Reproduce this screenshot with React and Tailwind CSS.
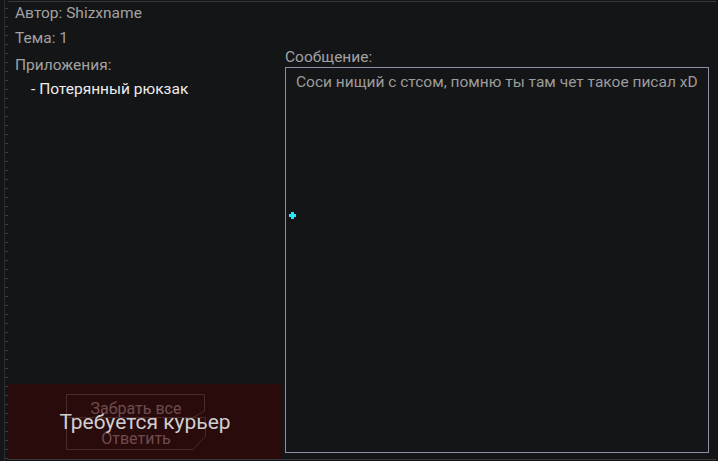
export default function App() {
  return (
    <div
      className="relative flex h-[461px] w-[718px] overflow-hidden bg-[#141517] text-[15.5px] leading-none"
      style={{ fontFamily: "Roboto, 'Noto Sans', sans-serif" }}
    >
      <Ruler side="left" />
      <div className="flex flex-1 flex-col border-t border-[#36373a] mt-[1px] border-b mb-[1px]">
        <div className="flex flex-1">
          <div className="flex w-[274px] flex-col">
            <div className="flex flex-col pl-[7px] pt-[4px] text-[#a2a2a2]">
              <p className="h-[25px]">Автор: Shizxname</p>
              <p className="h-[27px]">Тема: 1</p>
              <p className="h-[24px]">Приложения:</p>
              <p className="pl-[16px] text-[#ececec]">- Потерянный рюкзак</p>
            </div>
            <div className="mt-auto">
              <CourierPanel />
            </div>
          </div>
          <div className="flex flex-1 flex-col pl-[3px] pr-[7px] pt-[48px] pb-[6px]">
            <p className="mb-[1px] text-[#a2a2a2]">Сообщение:</p>
            <div className="relative flex-1 whitespace-nowrap border border-[#8e8ea6] px-[10px] pt-[7px] text-[#9c9c9c]">
              Соси нищий с стсом, помню ты там чет такое писал xD
              <svg className="absolute left-[3px] top-[144px]" width="7" height="7" viewBox="0 0 7 7">
                <path d="M2 0h3v2h2v3H5v2H2V5H0V2h2z" fill="#1fe8ff" />
              </svg>
            </div>
          </div>
        </div>
      </div>
      <Ruler side="right" />
    </div>
  );
}

function Ruler({ side }) {
  return (
    <div className={side === "left" ? "flex w-[8px] shrink-0 justify-end pr-[3px]" : "flex w-[4px] shrink-0 pl-[2px]"}>
      <div
        className={
          side === "left"
            ? "relative h-full w-[1px] bg-[#2c2d2f]"
            : "relative h-full w-[1px] bg-transparent"
        }
      >
        <div
          className={
            "absolute top-0 h-full w-[3px] bg-[repeating-linear-gradient(to_bottom,transparent_0px,transparent_8px,#3c3d40_8px,#3c3d40_9px)] " +
            (side === "left" ? "left-[1px]" : "left-0")
          }
        />
      </div>
    </div>
  );
}

function CourierPanel() {
  return (
    <div className="relative flex h-[75px] w-[274px] items-center justify-center bg-[#2a0b0c]">
      <div className="relative ml-[-18px] flex h-[56px] w-[140px] flex-col items-center justify-between pt-[7px] pb-[3px] text-[#6f4b4c]">
        <svg className="absolute inset-0" width="140" height="56" viewBox="0 0 140 56">
          <path
            d="M0.5 0.5 H138.5 V17 L127 23.5 H0.5 Z M0.5 23.5 H139.5 V42 L127 55.5 H0.5 Z"
            fill="none"
            stroke="#4a2a2b"
            strokeWidth="1"
          />
        </svg>
        <span className="relative text-[16px]">Забрать все</span>
        <span className="relative text-[16px]">Ответить</span>
      </div>
      <span className="absolute left-0 right-0 top-[28px] text-center text-[21px] text-[#cfcfcf]">
        Требуется курьер
      </span>
    </div>
  );
}
